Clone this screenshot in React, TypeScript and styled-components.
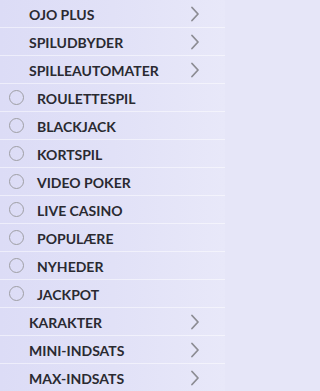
import { createGlobalStyle, styled } from "styled-components";

const GlobalStyle = createGlobalStyle`
    html, body {
        margin: 0;
        padding: 0;
        background: #e6e6f8;
    }
    * {
        box-sizing: border-box;
    }
`;

const MenuList = styled.ul`
    list-style: none;
    margin: 0;
    padding: 0;
    width: 225px;
    background: linear-gradient(90deg, #dcdcf6 0%, #e1e1f7 50%, #e8e8f9 100%);
    font-family: Lato, "Open Sans", sans-serif;
`;

const MenuRow = styled.li<{$sub?: boolean}>`
    display: flex;
    align-items: center;
    height: 28px;
    padding-left: ${props => props.$sub ? '9px' : '29px'};
    padding-right: 25px;
    border-bottom: 1px solid rgba(255, 255, 255, 0.5);
    color: #2a2a31;
    font-size: 14px;
    font-weight: 700;
`;

const Label = styled.span`
    flex: 1;
    white-space: nowrap;
    padding-top: 1px;
`;

const Radio = styled.span`
    width: 15px;
    height: 15px;
    margin-right: 13px;
    border: 1.8px solid #9e9ea4;
    border-radius: 50%;
    flex-shrink: 0;
`;

function Chevron() {
    return (
        <svg width="10" height="16" viewBox="0 0 10 16" fill="none">
            <path d="M2 1.5 L8 8 L2 14.5" stroke="#8c8c93" strokeWidth="1.8" strokeLinecap="round" strokeLinejoin="round" />
        </svg>
    );
}

const topItems = ["OJO PLUS", "SPILUDBYDER", "SPILLEAUTOMATER"];
const subItems = ["ROULETTESPIL", "BLACKJACK", "KORTSPIL", "VIDEO POKER", "LIVE CASINO", "POPULÆRE", "NYHEDER", "JACKPOT"];
const bottomItems = ["KARAKTER", "MINI-INDSATS", "MAX-INDSATS"];

export default function App() {
    return (
        <>
            <GlobalStyle />
            <MenuList>
                {topItems.map(item => (
                    <MenuRow key={item}>
                        <Label>{item}</Label>
                        <Chevron />
                    </MenuRow>
                ))}
                {subItems.map(item => (
                    <MenuRow key={item} $sub>
                        <Radio />
                        <Label>{item}</Label>
                    </MenuRow>
                ))}
                {bottomItems.map(item => (
                    <MenuRow key={item}>
                        <Label>{item}</Label>
                        <Chevron />
                    </MenuRow>
                ))}
            </MenuList>
        </>
    );
}
